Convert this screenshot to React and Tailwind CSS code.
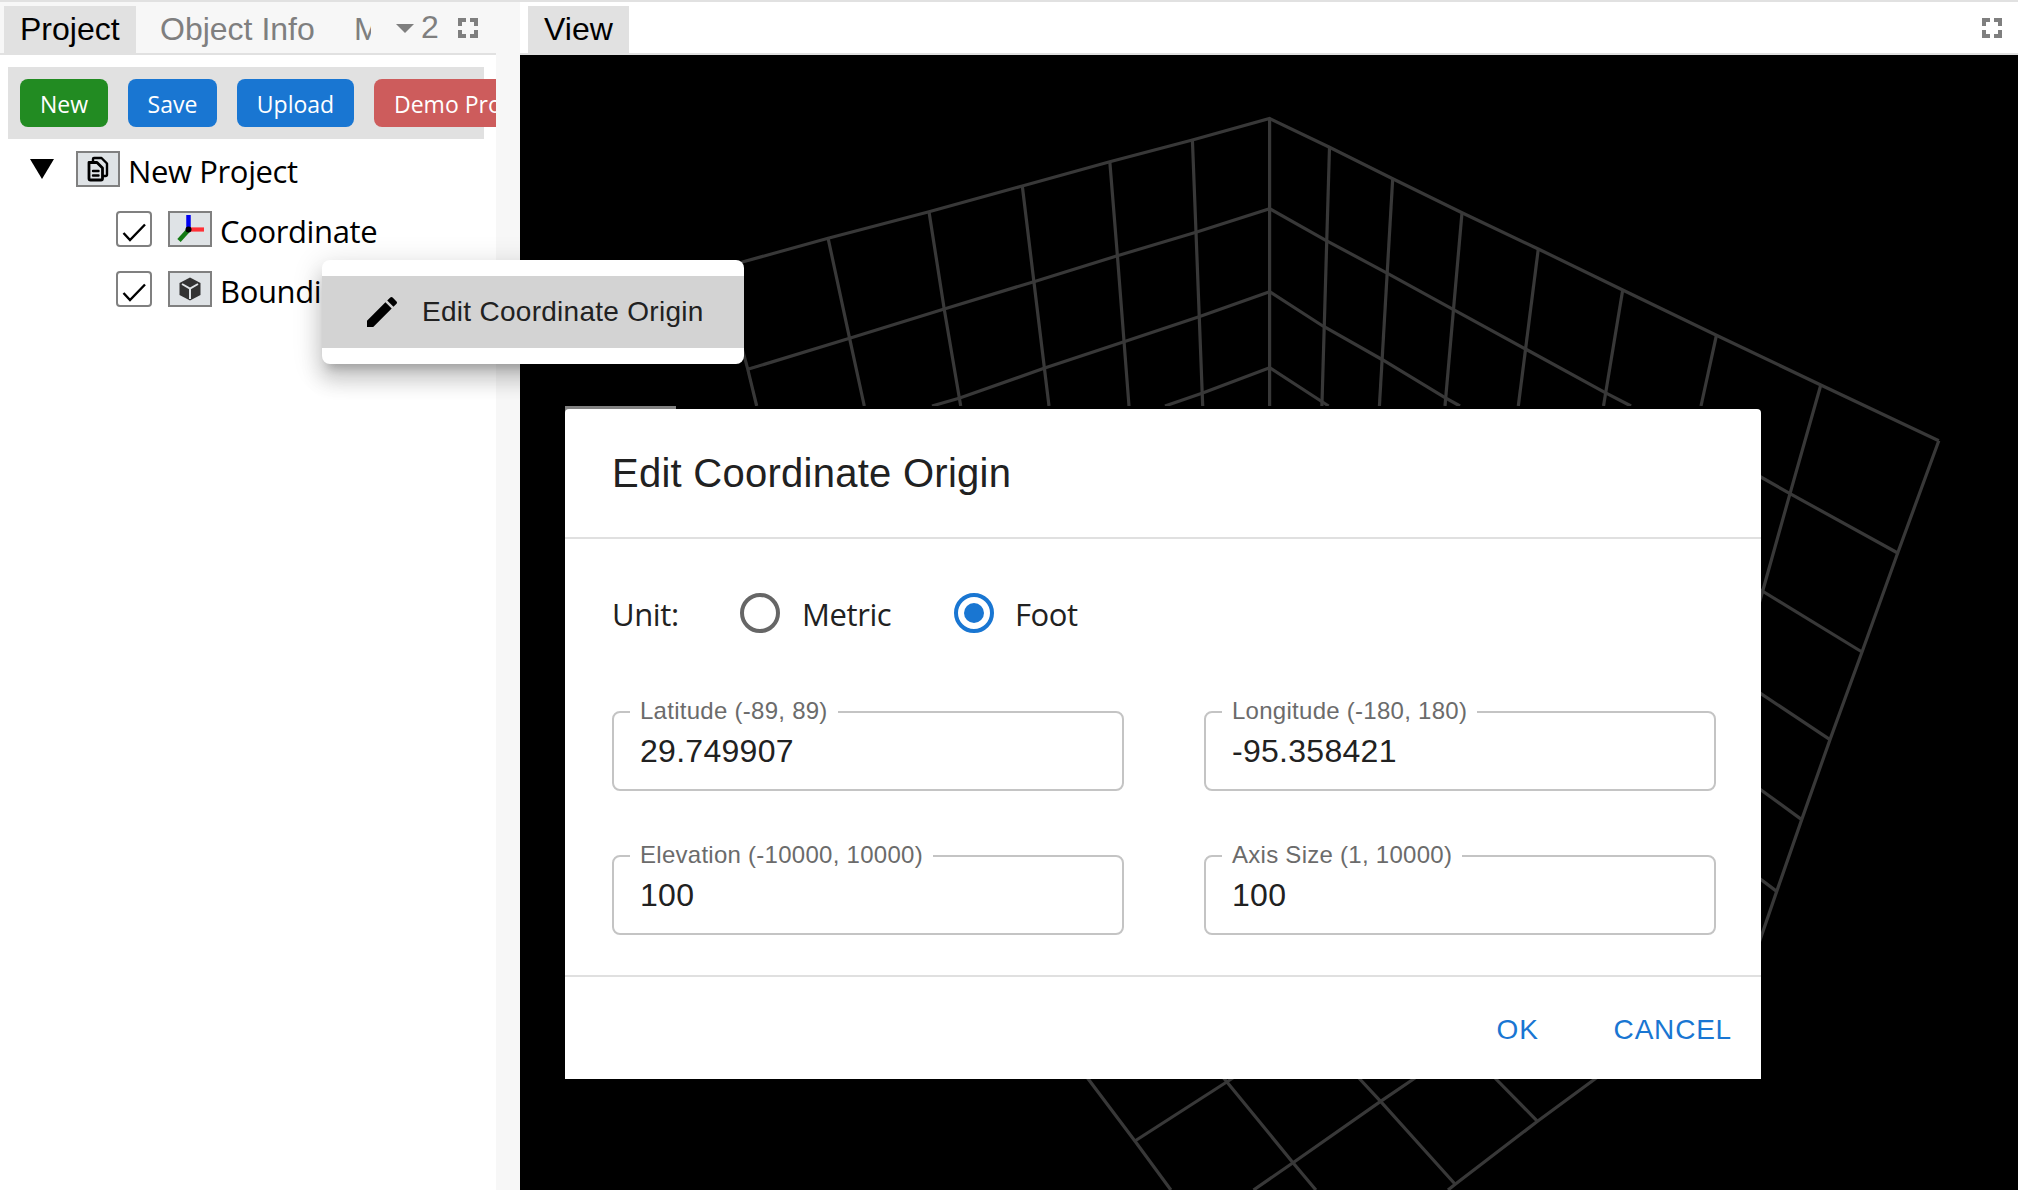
const GRID = [
  'M721 269L743.3 261.7L828.1 238.3L929 211.7L1022.3 186L1109.8 161.7L1192.4 140L1269.6 118.5L1329.5 147.3L1392.7 178.8L1462 212.7L1538.3 249L1622.7 290L1716.4 335.3L1820.8 385L1938.8 440.7',
  'M747.8 369.3L849.6 338.3L944.2 309L1033.9 281.7L1117.4 255.7L1196 232.3L1269.6 208.7L1326.3 240.7L1387.5 273.3L1453 309.3L1525.5 349L1605.2 392.7L1631 406',
  'M932 406L959 398.3L1044 368.3L1124 341.7L1199 316.7L1269.6 291.7L1322.8 326L1382 359.5L1445 397.7L1460 406',
  'M1165 406L1202 393.3L1269.6 367.7L1328.6 406',
  'M721 269L747.8 369.3L756.7 406',
  'M828.1 238.3L849.6 338.3L864.3 406',
  'M929 211.7L944.2 309L960.7 406',
  'M1022.3 186L1033.9 281.7L1049 406',
  'M1109.8 161.7L1117.4 255.7L1129 406',
  'M1192.4 140L1196 232.3L1202.7 406',
  'M1269.6 118.5V406',
  'M1329.5 147.3L1321.9 406',
  'M1392.7 178.8L1379.4 406',
  'M1462 212.7L1445 406',
  'M1538.3 249L1518.3 406',
  'M1622.7 290L1603.5 406',
  'M1716.4 335.3L1701 406',
  'M1820.8 385L1790 493.6L1762.7 591L1759 604',
  'M1938.8 440.7L1897.7 553L1862 652L1830 739.6L1801.7 819.6L1776.7 891.4L1759 943',
  'M1759 476L1790 493.6L1897.7 553',
  'M1759 589L1862 652',
  'M1759 692.4L1830 739.6',
  'M1759 788.5L1801.7 819.6',
  'M1759 878L1776.7 891.4',
  'M1086 1076L1134.9 1141L1170.9 1190',
  'M1236 1076L1134.9 1141',
  'M1222 1076L1293 1162.7L1315.9 1190',
  'M1357 1076L1380.6 1101.3L1455.2 1184.3',
  'M1418 1076L1380.6 1101.3L1293 1162.7L1253.5 1190',
  'M1493 1076L1537.5 1121.3',
  'M1599 1076L1537.5 1121.3L1455.2 1184.3L1448 1190',
];

function MaximizeIcon({ className }) {
  return (
    <svg className={className} width="20" height="20" viewBox="0 0 20 20" fill="none" stroke="#7f7f7f" strokeWidth="4">
      <path d="M2 8V2H8M12 2H18V8M18 12V18H12M8 18H2V12" />
    </svg>
  );
}

function ToolButton({ className, children }) {
  return (
    <button className={"h-12 shrink-0 rounded-lg pt-0.5 font-['Open_Sans',sans-serif] text-[23px] whitespace-nowrap text-white " + className}>
      {children}
    </button>
  );
}

function IconBox({ children }) {
  return <span className="flex h-9 w-11 shrink-0 items-center justify-center border-2 border-[#808080] bg-[#dfe3e6]">{children}</span>;
}

function TreeLabel({ children }) {
  return <span className="ml-2 pt-1 tracking-[-0.38px] whitespace-nowrap">{children}</span>;
}

function Checkbox() {
  return (
    <span className="mr-4 h-9 w-9 shrink-0 rounded border-2 border-[#808080] bg-white">
      <svg width="32" height="32" viewBox="0 0 32 32" fill="none" stroke="#000" strokeWidth="2.4">
        <path d="M5.5 20L12 27L27 11.500" />
      </svg>
    </span>
  );
}

function Radio({ checked }) {
  return (
    <svg width="48" height="48" viewBox="0 0 24 24" className={checked ? 'text-[#1976d2]' : 'text-[#666]'}>
      <circle cx="12" cy="12" r="9" fill="none" stroke="currentColor" strokeWidth="2" />
      {checked && <circle cx="12" cy="12" r="5" fill="currentColor" />}
    </svg>
  );
}

function Field({ label, value }) {
  return (
    <div className="relative h-20 w-[512px]">
      <fieldset className="absolute inset-x-0 -top-3 bottom-0 rounded-lg border-2 border-[#c4c4c4] pl-4">
        <legend className="h-[26px] px-[10px] text-2xl leading-[24px] tracking-[0.27px] text-[#6b6b6b]">{label}</legend>
      </fieldset>
      <div className="relative pl-7 pt-[21px] text-[32px] leading-[38px] tracking-[0.28px] text-[#212121]">{value}</div>
    </div>
  );
}

function Dialog() {
  return (
    <div className="absolute left-[565px] top-[406px] w-[1196px] bg-black">
      <div className="flex h-[3px]">
        <div className="h-2 w-[111px] bg-[#828282]" />
      </div>
      <div className="relative flex h-[670px] flex-col rounded-t bg-white text-[#212121]">
        <h2 className="flex h-[128px] items-center px-[47px] text-[40px] tracking-[0.26px]">Edit Coordinate Origin</h2>
        <div className="h-[440px] border-y-2 border-[#e0e0e0] px-[47px]">
          <div className="mt-[50px] flex h-12 items-center font-['Open_Sans',sans-serif] text-[31px] tracking-[-0.4px]">
            <span className="w-[124px] pt-0.5">Unit:</span>
            <Radio />
            <span className="ml-[18px] w-[148px] pt-0.5">Metric</span>
            <Radio checked />
            <span className="ml-[17px] pt-0.5">Foot</span>
          </div>
          <div className="mt-[74px] grid grid-cols-[512px_512px] gap-x-20 gap-y-16">
            <Field label="Latitude (-89, 89)" value="29.749907" />
            <Field label="Longitude (-180, 180)" value="-95.358421" />
            <Field label="Elevation (-10000, 10000)" value="100" />
            <Field label="Axis Size (1, 10000)" value="100" />
          </div>
        </div>
        <div className="flex flex-1 items-center justify-end pt-1 pr-[29px] text-[28px] tracking-[0.8px] text-[#1976d2]">
          <button className="mr-[75px]">OK</button>
          <button>CANCEL</button>
        </div>
      </div>
    </div>
  );
}

function ContextMenu() {
  return (
    <div className="absolute left-[322px] top-[260px] h-[104px] w-[422px] rounded-lg bg-white py-4 shadow-[0_10px_10px_-6px_rgba(0,0,0,0.2),0_16px_20px_2px_rgba(0,0,0,0.14),0_6px_28px_4px_rgba(0,0,0,0.12)]">
      <div className="flex h-[72px] items-center bg-[#d3d3d3] pl-10">
        <svg width="40" height="40" viewBox="0 0 24 24" className="mr-[20px]">
          <path d="M3 17.25V21h3.75L17.81 9.94l-3.75-3.75L3 17.25zM20.71 7.04c.39-.39.39-1.02 0-1.41l-2.34-2.34a.9959.9959 0 0 0-1.41 0l-1.83 1.83 3.75 3.75 1.83-1.83z" />
        </svg>
        <span className="whitespace-nowrap text-[28px] tracking-[0.28px] text-[#212121]">Edit Coordinate Origin</span>
      </div>
    </div>
  );
}

function ProjectPanel() {
  return (
    <div className="flex w-[496px] shrink-0 flex-col overflow-hidden bg-white">
      <div className="flex h-[53px] border-b-2 border-[#e1e1e1] bg-[#f7f7f7] pl-1 text-[32px] leading-[38px]">
        <div className="mt-1 h-[47px] w-[132px] bg-[#e1e1e1] pl-4 pt-1">Project</div>
        <div className="ml-6 w-[192px] whitespace-nowrap pt-2 text-[#7f7f7f]">Object Info</div>
        <div className="ml-[2px] w-[17px] overflow-hidden pt-2 text-[#7f7f7f]">M</div>
        <svg width="18" height="9" viewBox="0 0 18 9" className="ml-[25px] mt-[22px]">
          <path d="M0 0H18L9 9Z" fill="#7f7f7f" />
        </svg>
        <div className="ml-[7px] w-[18px] pt-1.5 text-[#7f7f7f]">2</div>
        <MaximizeIcon className="ml-[19px] mt-4" />
      </div>
      <div className="ml-2 mt-3 flex h-[72px] w-[476px] gap-5 bg-[#e1e1e1] p-3">
        <ToolButton className="w-[88px] bg-[#228b22]">New</ToolButton>
        <ToolButton className="w-[89px] bg-[#1976d2]">Save</ToolButton>
        <ToolButton className="w-[117px] bg-[#1976d2]">Upload</ToolButton>
        <ToolButton className="w-[180px] bg-[#cd5c5c] pl-5 text-left">Demo Project</ToolButton>
      </div>
      <div className="flex flex-col font-['Open_Sans',sans-serif] text-[31px]">
        <div className="flex h-[60px] items-center pl-[30px]">
          <svg width="24" height="20" viewBox="0 0 24 20" className="mr-[22px]">
            <path d="M0 0H24L12 20Z" />
          </svg>
          <IconBox>
            <svg width="24" height="28" viewBox="0 0 24 28" fill="none" stroke="#000" strokeWidth="2.8" strokeLinejoin="round" strokeLinecap="round">
              <path d="M3 7.500H11L16.500 13V23.500Q16.500 25 15 25H4.500Q3 25 3 23.500V7.500Z" />
              <path d="M7 7V4Q7 3 8 3H15.500L21 8.500V19.500Q21 21 19.500 21H17M7 16H12.500M7 20.500H12.500" strokeWidth="2.400" />
            </svg>
          </IconBox>
          <TreeLabel>New Project</TreeLabel>
        </div>
        <div className="flex h-[60px] items-center pl-[116px]">
          <Checkbox />
          <IconBox>
            <svg width="40" height="32" viewBox="0 0 40 32">
              <path d="M18.500 2V16" stroke="#0000f0" strokeWidth="4.500" />
              <path d="M18.500 16.500H34" stroke="#ff3036" strokeWidth="4.200" />
              <path d="M18.500 17L9 27.500" stroke="#137a13" strokeWidth="4.500" />
              <circle cx="18.500" cy="16.500" r="3" />
            </svg>
          </IconBox>
          <TreeLabel>Coordinate</TreeLabel>
        </div>
        <div className="flex h-[60px] items-center pl-[116px]">
          <Checkbox />
          <IconBox>
            <svg width="24" height="26" viewBox="0 0 24 26">
              <path d="M12 1.500L22.500 7V19L12 24.500L1.500 19V7Z" fill="#333" />
              <path d="M4 8L12 12.500L20 8M12 12.500V23" fill="none" stroke="#dfe3e6" strokeWidth="2" />
            </svg>
          </IconBox>
          <TreeLabel>Bounding Box</TreeLabel>
        </div>
      </div>
    </div>
  );
}

function ViewPanel() {
  return (
    <div className="flex min-w-0 flex-1 flex-col bg-black">
      <div className="flex h-[53px] shrink-0 border-b-2 border-[#e1e1e1] bg-white pl-2 pr-4 text-[32px] leading-[38px]">
        <div className="mt-1 h-[47px] w-[101px] bg-[#e1e1e1] pl-4 pt-1">View</div>
        <MaximizeIcon className="ml-auto mt-4" />
      </div>
      <svg className="min-h-0 flex-1" width="1498" height="1135" viewBox="520 55 1498 1135" fill="none" stroke="#383838" strokeWidth="3.200">
        {GRID.map((d) => (
          <path key={d} d={d} />
        ))}
      </svg>
    </div>
  );
}

export default function App() {
  return (
    <div className="relative flex h-[1190px] w-[2018px] overflow-hidden border-t-2 border-[#e1e1e1] bg-[#f7f7f7] font-['Liberation_Sans',Arial,sans-serif] text-black">
      <ProjectPanel />
      <div className="w-6 shrink-0 bg-[#f7f7f7]" />
      <ViewPanel />
      <div className="absolute inset-x-0 -top-0.5 h-0">
        <ContextMenu />
        <Dialog />
      </div>
    </div>
  );
}
